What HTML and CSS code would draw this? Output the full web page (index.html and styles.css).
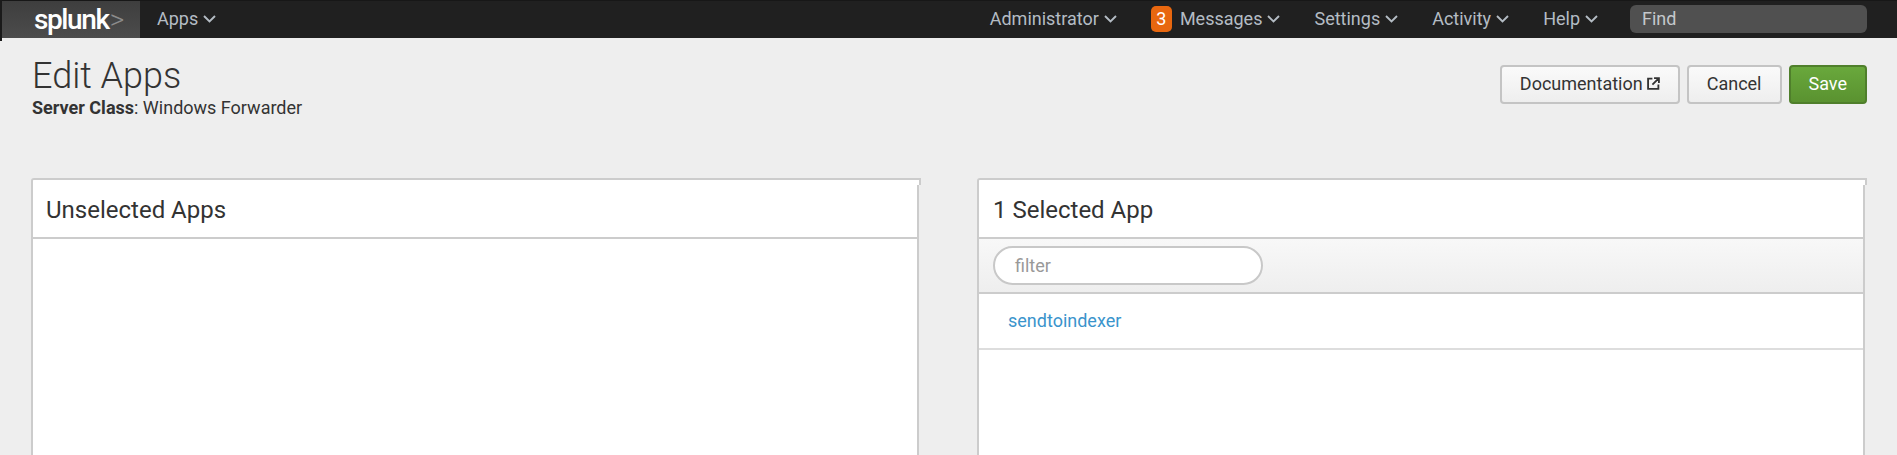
FILE: index.html
```html
<!DOCTYPE html>
<html lang="en">
<head>
<meta charset="utf-8">
<title>Edit Apps</title>
<link rel="stylesheet" href="styles.css">
</head>
<body>
<header class="nav">
  <a class="logo">splunk<span class="logo-gt">&gt;</span></a>
  <a class="nav-item nav-apps">Apps<svg class="chev" viewBox="0 0 13 8"><path d="M1 1l5.500 5.500L12 1"/></svg></a>
  <div class="nav-right">
    <a class="nav-item">Administrator<svg class="chev" viewBox="0 0 13 8"><path d="M1 1l5.500 5.500L12 1"/></svg></a>
    <a class="nav-item nav-msg"><span class="badge">3</span>Messages<svg class="chev" viewBox="0 0 13 8"><path d="M1 1l5.500 5.500L12 1"/></svg></a>
    <a class="nav-item">Settings<svg class="chev" viewBox="0 0 13 8"><path d="M1 1l5.500 5.500L12 1"/></svg></a>
    <a class="nav-item">Activity<svg class="chev" viewBox="0 0 13 8"><path d="M1 1l5.500 5.500L12 1"/></svg></a>
    <a class="nav-item">Help<svg class="chev" viewBox="0 0 13 8"><path d="M1 1l5.500 5.500L12 1"/></svg></a>
    <div class="find">Find</div>
  </div>
</header>
<main class="page">
  <div class="page-head">
    <div>
      <h1 class="title">Edit Apps</h1>
      <p class="subtitle"><b>Server Class</b>: Windows Forwarder</p>
    </div>
    <div class="actions">
      <button class="btn btn-doc">Documentation<svg class="ext" viewBox="0 0 12 12"><path d="M5 1.500H1V11h9.500V7M6.500 1H11v4.500M11 1L5 7"/></svg></button>
      <button class="btn">Cancel</button>
      <button class="btn btn-primary">Save</button>
    </div>
  </div>
  <div class="panels">
    <section class="panel">
      <h2 class="panel-title panel-title-left">Unselected Apps</h2>
    </section>
    <section class="panel">
      <h2 class="panel-title">1 Selected App</h2>
      <div class="filter-bar"><div class="filter">filter</div></div>
      <div class="row"><a class="app-link">sendtoindexer</a></div>
    </section>
  </div>
</main>
</body>
</html>
```
FILE: styles.css
```css
* { box-sizing: border-box; }
html, body { margin: 0; height: 455px; overflow: hidden; }
body { background: #eee; font-family: Roboto, "Liberation Sans", sans-serif; color: #333; font-size: 18px; }

.nav { height: 38px; background: #202020; border-top: 1px solid #171717; display: flex; align-items: stretch; margin-left: 2px; position: relative; color: #b4bcc4; }
.nav::before { content: ""; position: absolute; left: -2px; top: -1px; width: 2px; height: 41px; background: #1a1a1a; }
.logo { width: 138px; padding-left: 32px; background: linear-gradient(#3e3e3e, #4c4c4c); color: #fff; font: 500 28px/37px Roboto, sans-serif; letter-spacing: -1.4px; }
.logo-gt { color: #8c8c8c; font-weight: 300; margin-left: 1px; }
.nav-item { display: flex; align-items: center; gap: 5px; line-height: 36px; padding-bottom: 1px; white-space: nowrap; }
.nav-apps { margin-left: 17px; }
.nav-right { margin-left: auto; display: flex; align-items: stretch; gap: 34px; padding-right: 30px; }
.nav-msg .badge { margin-right: 3px; }
.chev { width: 13px; height: 8px; fill: none; stroke: currentColor; stroke-width: 1.9; }
.badge { width: 21px; height: 26px; border-radius: 5px; background: #e8670f; color: #fff; display: flex; align-items: center; justify-content: center; }
.find { width: 237px; height: 28px; margin: 4px 0 0 -2px; border-radius: 6px; background: #505050; color: #c4c8cc; padding-left: 12px; line-height: 28px; }

.page { padding: 0 30px 0 31px; }
.page-head { display: flex; justify-content: space-between; height: 140px; padding-left: 1px; }
.title { margin: 18px 0 0; font-size: 36px; line-height: 40px; font-weight: 300; color: #333; }
.subtitle { margin: 1px 0 0; font-size: 18px; line-height: 22px; }
.subtitle b { font-weight: 700; }
.actions { display: flex; gap: 7px; margin-top: 27px; height: 39px; }
.btn { font: 18px Roboto, sans-serif; color: #333; background: linear-gradient(#fafafa, #eee); border: 2px solid #c4c4c4; border-radius: 4px; padding: 0 18px 2px; }
.btn-doc { display: flex; align-items: center; gap: 4px; }
.btn-primary { background: linear-gradient(#69a83c, #5a9230); border-color: #4f7f2b; color: #fff; }
.ext { width: 13px; height: 13px; fill: none; stroke: #333; stroke-width: 1.7; }

.panels { display: grid; grid-template-columns: 888px 888px; gap: 58px; }
.panel { position: relative; background: #fff; border: 2px solid #ccc; border-bottom: 0; border-radius: 3px 0 0 0; height: 300px; }
.panel::after { content: ""; position: absolute; top: -2px; right: -4px; width: 6px; height: 5px; border-top: 2px solid #ccc; border-right: 2px solid #ccc; background: #fff; }
.panel-title { margin: 0; height: 59px; border-bottom: 2px solid #ccc; padding: 0 14px; font-size: 24px; font-weight: 400; line-height: 60px; color: #333; }
.panel-title-left { padding-left: 13px; }
.filter-bar { height: 55px; padding: 7px 14px 0; background: linear-gradient(#f8f8f8, #eee); border-bottom: 2px solid #ccc; }
.filter { width: 270px; height: 39px; border: 2px solid #c8c8c8; border-radius: 20px; background: #fff; color: #999; padding-left: 20px; line-height: 35px; }
.row { height: 56px; padding-left: 29px; border-bottom: 2px solid #ddd; line-height: 53px; }
.app-link { color: #3a94cc; }
```
